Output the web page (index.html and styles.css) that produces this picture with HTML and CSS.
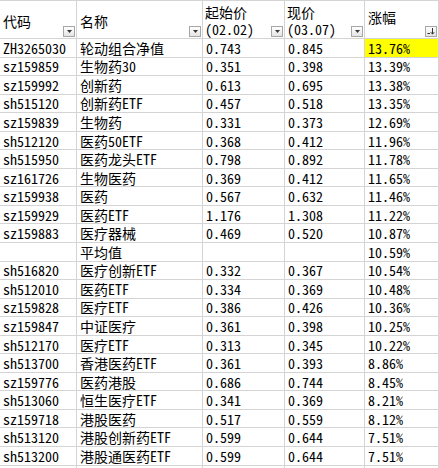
FILE: index.html
```html
<!DOCTYPE html>
<html>
<head>
<meta charset="utf-8">
<link rel="stylesheet" href="styles.css">
</head>
<body>
<div class="sheet">
  <div class="h hc1"><span class="ht">代码</span><span class="fb"><svg width="5" height="3" viewBox="0 0 5 3"><path d="M0 0H5L2.5 3Z" fill="#333"/></svg></span></div>
  <div class="h hc1"><span class="ht">名称</span><span class="fb"><svg width="5" height="3" viewBox="0 0 5 3"><path d="M0 0H5L2.5 3Z" fill="#333"/></svg></span></div>
  <div class="h hc2"><span class="ht2">起始价<br>(02.02)</span><span class="fb"><svg width="5" height="3" viewBox="0 0 5 3"><path d="M0 0H5L2.5 3Z" fill="#333"/></svg></span></div>
  <div class="h hc2"><span class="ht2">现价<br>(03.07)</span><span class="fb"><svg width="5" height="3" viewBox="0 0 5 3"><path d="M0 0H5L2.5 3Z" fill="#333"/></svg></span></div>
  <div class="h hc3"><span class="ht">涨幅</span><span class="fb"><svg width="8" height="7" viewBox="0 0 8 7"><path d="M0.5 5.5H3M5.5 0V6M3.8 4.2L5.5 6.2L7.2 4.2" stroke="#333" stroke-width="1" fill="none"/></svg></span></div>

  <div class="c">ZH3265030</div><div class="c">轮动组合净值</div><div class="c">0.743</div><div class="c">0.845</div><div class="c hl">13.76%</div>
  <div class="c">sz159859</div><div class="c">生物药30</div><div class="c">0.351</div><div class="c">0.398</div><div class="c">13.39%</div>
  <div class="c">sz159992</div><div class="c">创新药</div><div class="c">0.613</div><div class="c">0.695</div><div class="c">13.38%</div>
  <div class="c">sh515120</div><div class="c">创新药ETF</div><div class="c">0.457</div><div class="c">0.518</div><div class="c">13.35%</div>
  <div class="c">sz159839</div><div class="c">生物药</div><div class="c">0.331</div><div class="c">0.373</div><div class="c">12.69%</div>
  <div class="c">sh512120</div><div class="c">医药50ETF</div><div class="c">0.368</div><div class="c">0.412</div><div class="c">11.96%</div>
  <div class="c">sh515950</div><div class="c">医药龙头ETF</div><div class="c">0.798</div><div class="c">0.892</div><div class="c">11.78%</div>
  <div class="c">sz161726</div><div class="c">生物医药</div><div class="c">0.369</div><div class="c">0.412</div><div class="c">11.65%</div>
  <div class="c">sz159938</div><div class="c">医药</div><div class="c">0.567</div><div class="c">0.632</div><div class="c">11.46%</div>
  <div class="c">sz159929</div><div class="c">医药ETF</div><div class="c">1.176</div><div class="c">1.308</div><div class="c">11.22%</div>
  <div class="c">sz159883</div><div class="c">医疗器械</div><div class="c">0.469</div><div class="c">0.520</div><div class="c">10.87%</div>
  <div class="c"></div><div class="c">平均值</div><div class="c"></div><div class="c"></div><div class="c">10.59%</div>
  <div class="c">sh516820</div><div class="c">医疗创新ETF</div><div class="c">0.332</div><div class="c">0.367</div><div class="c">10.54%</div>
  <div class="c">sh512010</div><div class="c">医药ETF</div><div class="c">0.334</div><div class="c">0.369</div><div class="c">10.48%</div>
  <div class="c">sz159828</div><div class="c">医疗ETF</div><div class="c">0.386</div><div class="c">0.426</div><div class="c">10.36%</div>
  <div class="c">sz159847</div><div class="c">中证医疗</div><div class="c">0.361</div><div class="c">0.398</div><div class="c">10.25%</div>
  <div class="c">sh512170</div><div class="c">医疗ETF</div><div class="c">0.313</div><div class="c">0.345</div><div class="c">10.22%</div>
  <div class="c">sh513700</div><div class="c">香港医药ETF</div><div class="c">0.361</div><div class="c">0.393</div><div class="c">8.86%</div>
  <div class="c">sz159776</div><div class="c">医药港股</div><div class="c">0.686</div><div class="c">0.744</div><div class="c">8.45%</div>
  <div class="c">sh513060</div><div class="c">恒生医疗ETF</div><div class="c">0.341</div><div class="c">0.369</div><div class="c">8.21%</div>
  <div class="c">sz159718</div><div class="c">港股医药</div><div class="c">0.517</div><div class="c">0.559</div><div class="c">8.12%</div>
  <div class="c">sh513120</div><div class="c">港股创新药ETF</div><div class="c">0.599</div><div class="c">0.644</div><div class="c">7.51%</div>
  <div class="c">sh513200</div><div class="c">港股通医药ETF</div><div class="c">0.599</div><div class="c">0.644</div><div class="c">7.51%</div>
  <div class="c"></div><div class="c"></div><div class="c"></div><div class="c"></div><div class="c"></div>
</div>
</body>
</html>
```

FILE: styles.css
```css
html, body {
  margin: 0;
  padding: 0;
  background: #ffffff;
}
.sheet {
  display: grid;
  grid-template-columns: 77px 126px 82px 80px 74px;
  grid-template-rows: 38px repeat(24, 18.55px);
  width: 439px;
  height: 468px;
  overflow: hidden;
  font-family: "Noto Sans Mono CJK SC", "Noto Sans CJK SC", "Liberation Mono", monospace;
  font-size: 14px;
  color: #000;
  border-top: 1px solid #d4d4d4;
  box-sizing: border-box;
}
.h, .c {
  box-sizing: border-box;
  border-right: 1px solid #d4d4d4;
  border-bottom: 1px solid #d4d4d4;
  white-space: nowrap;
  overflow: hidden;
}
.h {
  position: relative;
}
.c {
  display: flex;
  align-items: center;
  padding-left: 3px;
  line-height: 1;
}
.ht {
  position: absolute;
  left: 3px;
  line-height: 17px;
}
.hc1 .ht { top: 12px; }
.hc3 .ht { top: 8px; }
.ht2 {
  position: absolute;
  left: 2px;
  top: 3px;
  line-height: 17px;
}
.fb {
  position: absolute;
  right: 1px;
  bottom: 1px;
  width: 12px;
  height: 11px;
  box-sizing: border-box;
  border: 1px solid #a6a6a6;
  background: linear-gradient(#ffffff, #e4e4e4);
  display: flex;
  align-items: center;
  justify-content: center;
}
.fb svg { display: block; }
.hl {
  background: #ffff00;
}
```
